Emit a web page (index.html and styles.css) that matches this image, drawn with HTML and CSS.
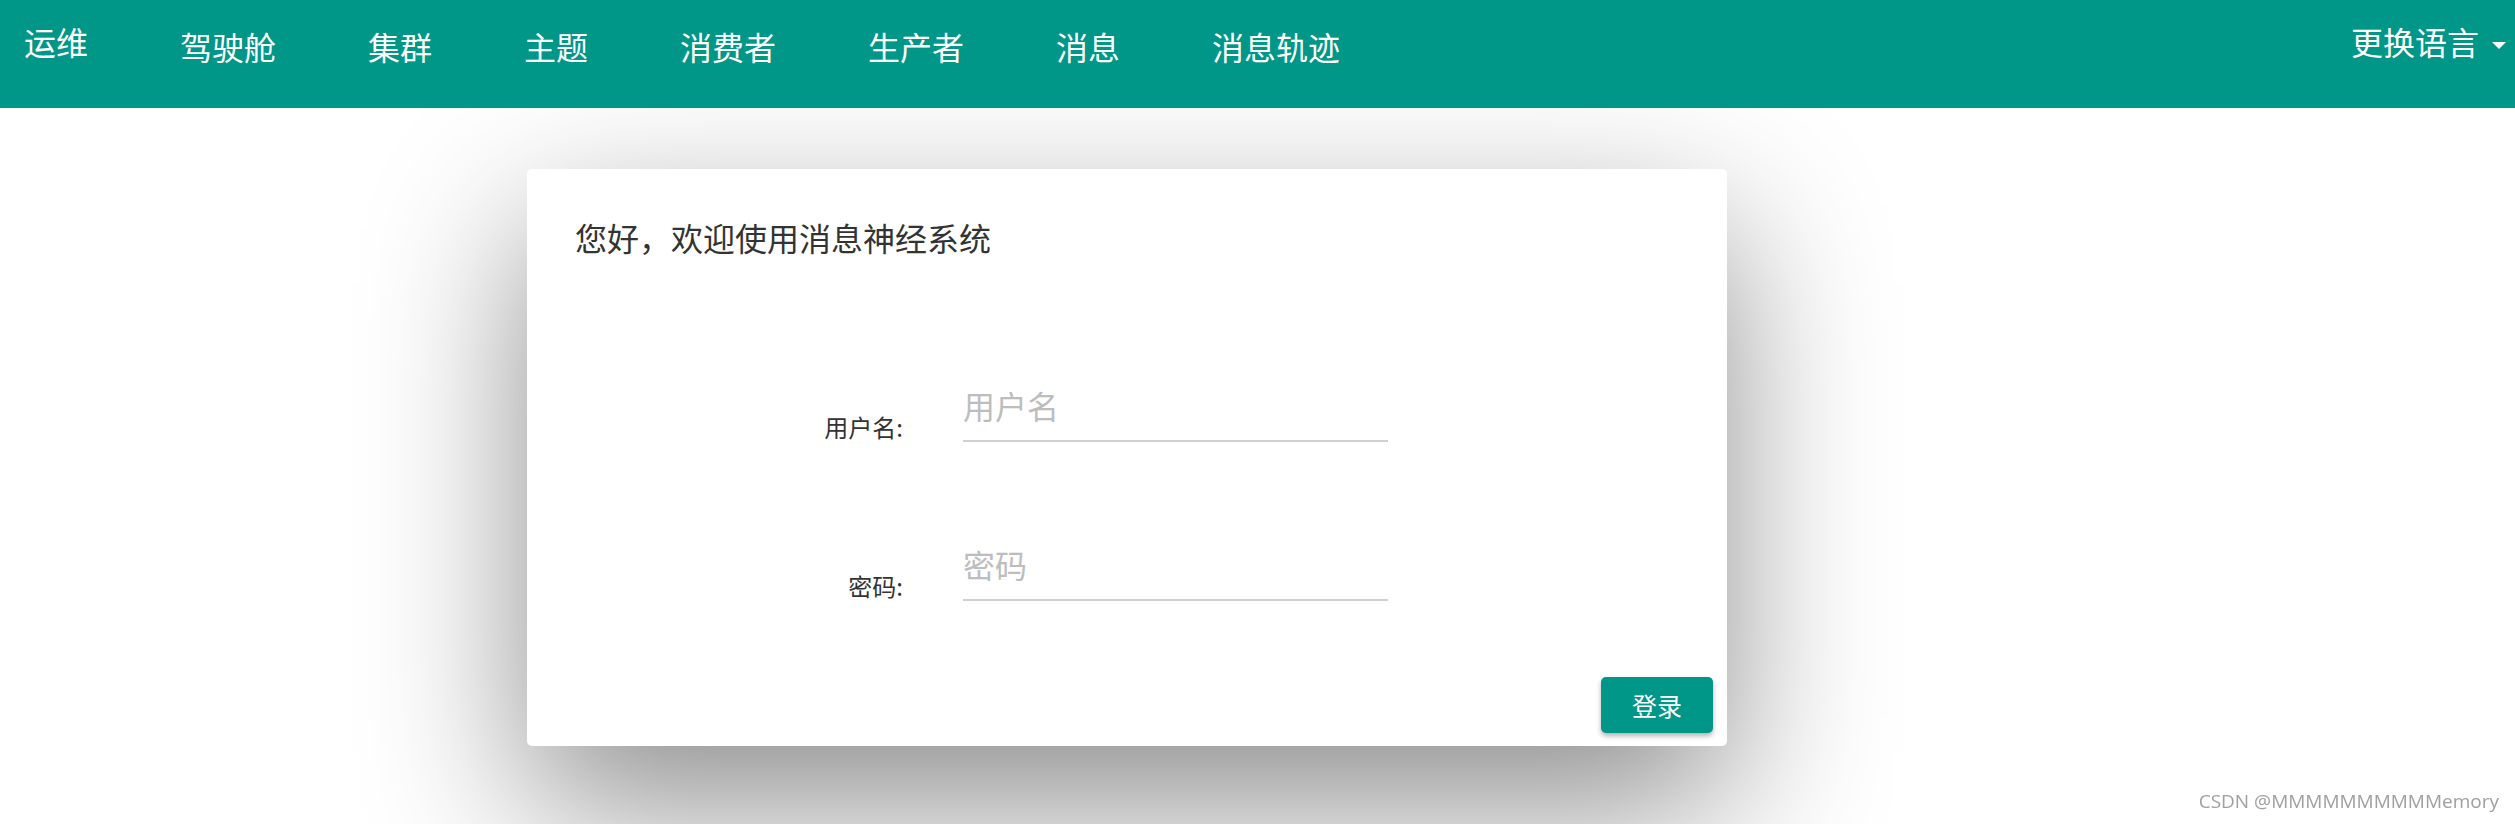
FILE: index.html
```html
<!DOCTYPE html>
<html lang="zh-CN">
<head>
<meta charset="utf-8">
<title>消息神经系统</title>
<link rel="stylesheet" href="styles.css">
</head>
<body>
<header class="topbar">
  <a class="brand">运维</a>
  <nav class="nav">
    <a class="nav-item">驾驶舱</a>
    <a class="nav-item">集群</a>
    <a class="nav-item">主题</a>
    <a class="nav-item">消费者</a>
    <a class="nav-item">生产者</a>
    <a class="nav-item">消息</a>
    <a class="nav-item">消息轨迹</a>
  </nav>
  <div class="lang">
    <span class="lang-text">更换语言</span>
    <span class="caret"></span>
  </div>
</header>
<main class="main">
  <section class="card">
    <h1 class="card-title">您好，欢迎使用消息神经系统</h1>
    <form class="form">
      <div class="form-row">
        <label class="form-label">用户名:</label>
        <input class="form-input" type="text" placeholder="用户名">
      </div>
      <div class="form-row">
        <label class="form-label">密码:</label>
        <input class="form-input" type="password" placeholder="密码">
      </div>
      <div class="form-actions">
        <button class="btn" type="button">登录</button>
      </div>
    </form>
  </section>
</main>
<div class="watermark">CSDN @MMMMMMMMMMemory</div>
</body>
</html>
```
FILE: styles.css
```css
html {
  overflow: hidden;
}

body {
  margin: 0;
  padding: 0;
  min-height: 824px;
  background: #fff;
  font-family: "Noto Sans CJK SC", "Noto Sans", sans-serif;
}

.topbar {
  height: 108px;
  background: #009688;
  display: flex;
  align-items: flex-start;
  padding: 0 9px 0 24px;
  box-sizing: border-box;
  color: #fff;
  position: relative;
  z-index: 1;
}

.brand {
  font-size: 32px;
  line-height: 32px;
  margin-top: 25px;
}

.nav {
  display: flex;
  gap: 92px;
  margin-left: 92px;
}

.nav-item {
  font-size: 32px;
  line-height: 32px;
  margin-top: 30px;
}

.lang {
  margin-left: auto;
  display: flex;
  align-items: flex-start;
  margin-top: 25px;
}

.lang-text {
  font-size: 32px;
  line-height: 32px;
}

.caret {
  width: 0;
  height: 0;
  border-left: 7px solid transparent;
  border-right: 7px solid transparent;
  border-top: 7px solid #fff;
  margin-left: 13px;
  margin-top: 17px;
}

.main {
  padding: 61px 0 0 527px;
}

.card {
  width: 1200px;
  box-sizing: border-box;
  background: #fff;
  border-radius: 5px;
  padding: 52px 14px 13px 48px;
  box-shadow: 0 60px 160px rgba(0, 0, 0, 0.45);
}

.card-title {
  margin: 0;
  font-size: 32px;
  line-height: 32px;
  font-weight: 400;
  color: #333;
}

.form {
  margin-top: 117px;
  display: flex;
  flex-direction: column;
}

.form-row {
  display: flex;
  align-items: flex-end;
  gap: 60px;
  margin-bottom: 87px;
}

.form-row + .form-row {
  margin-bottom: 76px;
}

.form-label {
  width: 328px;
  text-align: right;
  font-size: 24px;
  line-height: 24px;
  color: #333;
  padding-bottom: 3px;
}

.form-input {
  width: 425px;
  box-sizing: border-box;
  border: none;
  border-bottom: 2px solid #d0d0d0;
  padding: 19px 0;
  font-family: inherit;
  font-size: 32px;
  line-height: 32px;
  height: 72px;
  color: #333;
  outline: none;
  background: transparent;
}

.form-input::placeholder {
  color: #bdbdbd;
}

.form-actions {
  display: flex;
  justify-content: flex-end;
}

.btn {
  width: 112px;
  height: 56px;
  border: none;
  border-radius: 5px;
  background: #009688;
  color: #fff;
  font-family: inherit;
  font-size: 25px;
  box-shadow: 0 3px 5px rgba(0, 0, 0, 0.3);
  padding: 0;
}

.watermark {
  position: fixed;
  right: 16px;
  bottom: 13px;
  font-family: "Open Sans", sans-serif;
  font-size: 19px;
  line-height: 19px;
  color: #a0a0a0;
}
```
